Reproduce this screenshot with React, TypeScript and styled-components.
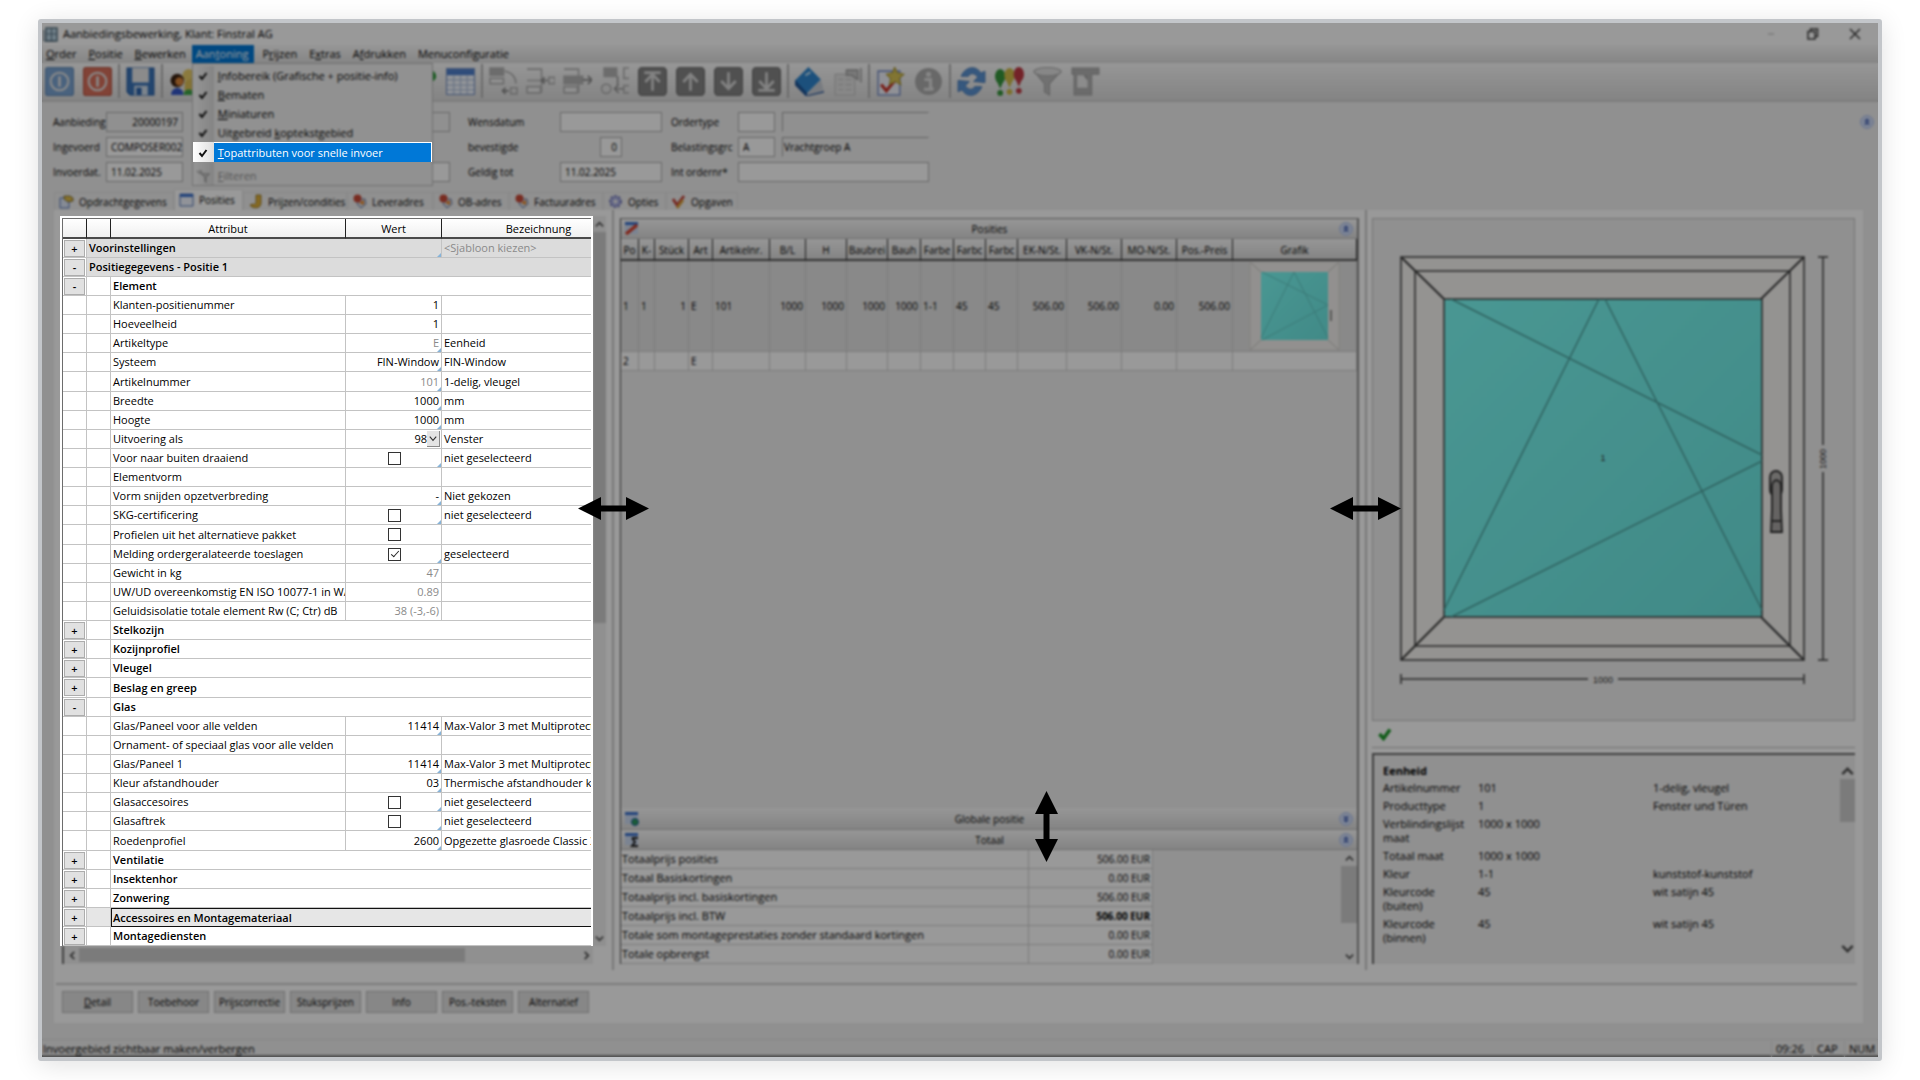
import React from "react";
import styled, { createGlobalStyle, css } from "styled-components";

const Global = createGlobalStyle`
  *, *::before, *::after { box-sizing: border-box; }
  body { margin: 0; background: #fff; }
  body, button, input, select, table { font-family: "Open Sans", "Noto Sans", sans-serif; font-size: 11px; line-height: 16px; color: #000; }
  button, input, select { margin: 0; padding: 0; }
`;

/* ---------- window frame ---------- */
const Page = styled.div`
  min-height: 100vh;
  padding: 19px 38px 20px;
`;
const Frame = styled.div`
  border: 4px solid #c3c6ca;
  border-radius: 3px;
  box-shadow: 0 4px 26px rgba(0, 0, 0, 0.12);
  position: relative;
  background: #f0f0f0;
`;
const Shade = styled.div`
  position: absolute;
  inset: 0;
  z-index: 5;
  background: rgba(0, 0, 0, 0.4);
  backdrop-filter: blur(1px);
  pointer-events: none;
`;

/* ---------- title, menu, toolbar ---------- */
const TitleBar = styled.header`
  height: 22px;
  background: #fff;
  display: flex;
  align-items: center;
  gap: 5px;
  padding: 0 16px 0 1px;
`;
const Title = styled.h1`
  font-size: 11px;
  line-height: 16px;
  font-weight: 400;
  margin: 0;
  flex: 1;
`;
const WindowButtons = styled.div`
  display: flex;
  gap: 28px;
`;
const BareButton = styled.button`
  border: 0;
  background: none;
  display: flex;
  align-items: center;
  justify-content: center;
`;
const MenuBar = styled.nav`
  height: 18px;
  display: flex;
  background: linear-gradient(#fbfbfb, #dedede);
`;
const MenuSlot = styled.div`
  position: relative;
  margin-right: 2px;
`;
const MenuButton = styled.button<{ $open?: boolean }>`
  border: 0;
  height: 18px;
  padding: 0 6px;
  background: ${(p) => (p.$open ? "#0078d7" : "none")};
  color: ${(p) => (p.$open ? "#fff" : "#000")};
  &:first-child {
    padding-left: 4px;
  }
`;
const Popup = styled.ul`
  position: absolute;
  top: 18px;
  left: 0;
  width: 241px;
  list-style: none;
  margin: 0;
  padding: 2px 0 0;
  border: 1px solid #bcbcbc;
  background: #f2f2f2;
`;
const MenuItem = styled.li<{ $active?: boolean }>`
  display: grid;
  grid-template-columns: 21px 1fr;
  height: 19px;
  background: linear-gradient(90deg, #fafafa, #dcdcdc 21px, #f2f2f2 21px);
  ${(p) =>
    p.$active &&
    css`
      position: relative;
      z-index: 10;
      height: 20px;
      padding: 1px 1px 0 0;
      background: linear-gradient(90deg, #fff, #dedede 21px, #fff 21px);
    `}
`;
const MenuMark = styled.span`
  display: flex;
  align-items: center;
  justify-content: center;
`;
const MenuAction = styled.button<{ $active?: boolean; $off?: boolean }>`
  border: 0;
  text-align: left;
  padding-left: 4px;
  white-space: nowrap;
  background: ${(p) => (p.$active ? "#0078d7" : "none")};
  color: ${(p) => (p.$active ? "#fff" : p.$off ? "#8d8d8d" : "#000")};
`;
const MenuRule = styled.li`
  height: 4px;
  background: linear-gradient(90deg, #fafafa, #dcdcdc 21px, #f2f2f2 21px);
`;
const ToolBar = styled.div`
  height: 39px;
  display: flex;
  align-items: center;
  gap: 9px;
  padding: 0 3px 1px;
  background: linear-gradient(#fbfbfb, #dcdcdc);
  border-bottom: 2px solid #d2d2d2;
`;
const ToolGroup = styled.div`
  display: flex;
  gap: 8px;
`;
const ToolButton = styled(BareButton)`
  width: 29px;
  height: 29px;
  & > svg {
    width: 29px;
    height: 29px;
  }
`;
const ToolGap = styled.span`
  width: 192px;
`;
const ToolRule = styled.span`
  width: 2px;
  height: 34px;
  margin: 0 -3px;
  background: #b4b4b4;
`;

/* ---------- head form ---------- */
const HeadForm = styled.form`
  display: grid;
  grid-template-columns: 53px 77px 17px 250px 18px 92px 102px 9px 67px 37px 7px 147px 1fr 15px;
  grid-auto-rows: 20px;
  row-gap: 5px;
  align-items: center;
  padding: 10px 4px 8px 11px;
`;
const FieldLabel = styled.label<{ $col: number }>`
  grid-column: ${(p) => p.$col};
  font-size: 10px;
  white-space: nowrap;
`;
const Field = styled.input<{ $col: string; $look?: "grey" | "sunken"; $right?: boolean; $short?: boolean }>`
  grid-column: ${(p) => p.$col};
  width: ${(p) => (p.$short ? "22px" : "100%")};
  justify-self: center;
  height: 20px;
  font-size: 10px;
  padding: ${(p) => (p.$right ? "0 4px" : "0 0 0 4px")};
  border: 1px solid #b0b0b0;
  border-radius: 0;
  text-align: ${(p) => (p.$right ? "right" : "left")};
  background: ${(p) => (p.$look ? "#f0f0f0" : "#fff")};
  ${(p) => p.$look === "sunken" && "border-color: #a8a8a8 #f4f4f4 #f4f4f4 #a8a8a8; padding: 0 1px;"}
`;
const HeadToggle = styled(BareButton)`
  grid-column: 14;
  grid-row: 1;
`;

/* ---------- tabs ---------- */
const Tabs = styled.div`
  display: flex;
  align-items: flex-end;
  padding-left: 12px;
  height: 20px;
`;
const Tab = styled.button<{ $on?: boolean; $w: number }>`
  width: ${(p) => p.$w}px;
  height: ${(p) => (p.$on ? 21 : 18)}px;
  display: flex;
  align-items: center;
  gap: 5px;
  padding-left: 4px;
  font-size: 10px;
  white-space: nowrap;
  border: 1px solid #e4e4e4;
  border-bottom: 0;
  background: ${(p) => (p.$on ? "#fff" : "#f0f0f0")};
`;
const TabPanel = styled.main`
  margin: 0 15px 0 12px;
  background: #fff;
`;
const Workspace = styled.div`
  display: grid;
  grid-template-columns: 546px 14px minmax(0, 1fr) 13px 483px;
  padding: 6px 8px 19px 6px;
`;
const Splitter = styled.div`
  justify-self: center;
  width: 2px;
  margin: -6px 0;
  background: #c8c8c8;
  display: flex;
  align-items: center;
  justify-content: center;
`;
const Arrow = styled.svg<{ $lift: number }>`
  position: relative;
  z-index: 10;
  flex: none;
  bottom: ${(p) => p.$lift}px;
  pointer-events: none;
`;

/* ---------- attribute grid ---------- */
const GridPane = styled.section`
  display: grid;
  grid-template-columns: 533px 13px;
  grid-template-rows: auto 18px;
`;
const LitArea = styled.div`
  position: relative;
  z-index: 10;
  background: #fff;
  padding: 2px 2px 0;
`;
const TableClip = styled.div`
  overflow: hidden;
  border: solid #6d6d6d;
  border-width: 1px 0 0 1px;
`;
const AttrTable = styled.table`
  table-layout: fixed;
  width: 573px;
  border-collapse: separate;
  border-spacing: 0;
  & th {
    height: 20px;
    padding: 2px 0 0;
    font-weight: 400;
    background: linear-gradient(#fff, #f0f0f0);
    border-right: 1px solid #222;
    border-bottom: 2px solid #4a4a4a;
  }
  & td {
    height: 19px;
    padding: 0 0 0 2px;
    line-height: 18px;
    white-space: nowrap;
    overflow: hidden;
    border-right: 1px solid #c3c3c3;
    border-bottom: 1px solid #c3c3c3;
  }
  & tbody tr:nth-child(8n) td {
    height: 20px;
  }
`;
const GroupRow = styled.tr<{ $shade?: boolean; $mark?: boolean }>`
  font-weight: 600;
  & td + td {
    ${(p) => p.$shade && "background: #dcdcdc;"}
    ${(p) => p.$mark && "background: #e6e6e6;"}
  }
  ${(p) =>
    p.$mark &&
    css`
      & td:last-child {
        border: solid #111;
        border-width: 1px 0 1px 1px;
        padding-left: 1px;
        line-height: 17px;
      }
    `}
`;
const corner = css`
  position: relative;
  &::after {
    content: "";
    position: absolute;
    right: 0;
    bottom: 0;
    border-left: 4px solid transparent;
    border-bottom: 4px solid #86b3d9;
  }
`;
const ValueCell = styled.td<{ $grey?: boolean; $corner?: boolean; $mid?: boolean }>`
  text-align: ${(p) => (p.$mid ? "center" : "right")};
  color: ${(p) => (p.$grey ? "#8a8a8a" : "#000")};
  ${(p) => p.$corner && corner}
`;
const Value = styled.span`
  margin-right: 2px;
`;
const CornerCell = styled.td`
  ${corner}
`;
const Hint = styled.td`
  font-weight: 400;
  color: #8a8a8a;
`;
const Expander = styled.button`
  display: block;
  width: 21px;
  height: 17px;
  margin-left: -1px;
  border: 1px solid #adadad;
  background: #e1e1e1;
  line-height: 13px;
  font-weight: 600;
`;
const Tick = styled.input`
  appearance: none;
  display: block;
  width: 13px;
  height: 13px;
  margin: 0 auto;
  border: 1px solid #333;
  background: #fff;
  &:checked::after {
    content: "";
    display: block;
    width: 4px;
    height: 8px;
    margin: 0 0 0 4px;
    border: solid #222;
    border-width: 0 1px 1px 0;
    transform: rotate(42deg);
  }
`;
const Pick = styled.span`
  position: relative;
  display: block;
  & select {
    appearance: none;
    display: block;
    width: 100%;
    height: 18px;
    border: 0;
    background: none;
    padding-right: 14px;
    text-align-last: right;
  }
  & svg {
    position: absolute;
    right: 1px;
    top: 1px;
    background: #e4e4e4;
    border: solid #8a8a8a;
    border-width: 0 1px 1px 0;
    pointer-events: none;
  }
`;

/* ---------- scroll bars ---------- */
const Scroll = styled.div<{ $across?: boolean }>`
  display: flex;
  flex-direction: ${(p) => (p.$across ? "row" : "column")};
  align-items: stretch;
  background: #f0f0f0;
  ${(p) => p.$across && "padding-left: 2px; border-left: 2px solid #6d6d6d; margin-left: 2px;"}
`;
const ScrollTrack = styled.div<{ $across?: boolean }>`
  flex: 1;
  display: flex;
  flex-direction: ${(p) => (p.$across ? "row" : "column")};
  padding: ${(p) => (p.$across ? "2px 0" : "0")};
`;
const Thumb = styled.div<{ $part: number }>`
  flex: 0 0 ${(p) => p.$part}%;
  background: #cdcdcd;
`;
const ScrollButton = styled(BareButton)`
  flex: none;
  min-width: 13px;
  min-height: 16px;
`;

/* ---------- middle pane ---------- */
const MidPane = styled.section`
  display: flex;
  flex-direction: column;
  margin-top: 2px;
  border: solid #8c8c8c;
  border-width: 1px 2px 0 1px;
  border-left-color: #555;
  background: #f0f0f0;
  min-width: 0;
`;
const Bar = styled.div<{ $tall?: boolean }>`
  height: ${(p) => (p.$tall ? 22 : 20)}px;
  display: grid;
  grid-template-columns: 18px 1fr 18px;
  align-items: center;
  text-align: center;
  padding: 0 2px 0 3px;
  background: linear-gradient(#fbfbfb, #dcdcdc);
  border-bottom: 1px solid #bdbdbd;
`;
const BarTitle = styled.h2`
  margin: 0;
  font-size: 10px;
  line-height: 16px;
  font-weight: 400;
`;
const Filler = styled.div`
  flex: 1;
  display: flex;
  justify-content: center;
  align-items: flex-end;
`;
const VArrow = styled.svg`
  position: relative;
  z-index: 10;
  left: 57px;
  margin-bottom: -54px;
  pointer-events: none;
`;
const PosTable = styled.table`
  table-layout: fixed;
  width: 100%;
  border-collapse: separate;
  border-spacing: 0;
  font-size: 10px;
  & th {
    height: 22px;
    padding: 1px 0 0;
    overflow: hidden;
    white-space: nowrap;
    font-weight: 400;
    background: linear-gradient(#fbfbfb, #dcdcdc);
    border-right: 1px solid #333;
    border-bottom: 2px solid #555;
  }
  & td {
    height: 19px;
    padding: 0 2px;
    overflow: hidden;
    white-space: nowrap;
    border-right: 1px solid #cfcfcf;
    border-bottom: 1px solid #cfcfcf;
    background: #fff;
  }
  & tbody tr:first-child td {
    height: 91px;
    background: #e4e4e4;
  }
`;
const NumCell = styled.td<{ $right?: boolean }>`
  text-align: ${(p) => (p.$right ? "right" : "left")};
`;
const ThumbCell = styled.td`
  & svg {
    display: block;
    margin: 0 auto;
  }
`;
const Totals = styled.div`
  display: grid;
  grid-template-columns: minmax(0, 1fr) 16px;
`;
const TotalTable = styled.table`
  width: 532px;
  max-width: 100%;
  border-collapse: separate;
  border-spacing: 0;
  & th,
  & td {
    height: 19px;
    padding: 0 2px 0 1px;
    font-weight: 400;
    text-align: left;
    background: #fff;
    border-right: 1px solid #cfcfcf;
    border-bottom: 1px solid #cfcfcf;
  }
  & td {
    width: 124px;
    font-size: 10px;
    text-align: right;
  }
`;
const Strong = styled.strong`
  font-weight: 700;
`;

/* ---------- right pane ---------- */
const SidePane = styled.section`
  display: flex;
  flex-direction: column;
  margin-top: 2px;
`;
const Drawing = styled.div`
  flex: 1;
  background: #f0f0f0;
  border: 1px solid #c2c2c2;
  & svg {
    display: block;
    width: 100%;
    height: 100%;
  }
`;
const CheckRow = styled.div`
  height: 27px;
  display: flex;
  align-items: center;
  padding-left: 6px;
  border-bottom: 1px solid #bdbdbd;
`;
const InfoBox = styled.div`
  margin-top: 5px;
  height: 211px;
  display: flex;
  justify-content: space-between;
  background: #f0f0f0;
  border: solid #6a6a6a;
  border-width: 2px 0 0 2px;
`;
const InfoTable = styled.table`
  align-self: flex-start;
  table-layout: fixed;
  width: 440px;
  margin: 8px 0 0 9px;
  border-collapse: collapse;
  & caption {
    text-align: left;
    font-weight: 700;
    line-height: 16px;
  }
  & th,
  & td {
    padding: 2px 16px 2px 0;
    text-align: left;
    vertical-align: top;
    font-weight: 400;
    line-height: 14px;
  }
`;
const InfoScroll = styled(Scroll)`
  width: 15px;
  padding: 8px 0;
`;

/* ---------- bottom ---------- */
const Actions = styled.div`
  display: flex;
  gap: 5px;
  margin: 0 6px 0 2px;
  padding: 6px 0 10px 6px;
  border-top: 2px solid #cfcfcf;
`;
const ActionButton = styled.button`
  width: 71px;
  height: 22px;
  font-size: 10px;
  white-space: nowrap;
  border: 1px solid #bcbcbc;
  background: #e1e1e1;
`;
const StatusBar = styled.footer`
  margin-top: 16px;
  height: 18px;
  display: flex;
  align-items: center;
  border-top: 1px solid #e0e0e0;
  border-bottom: 2px solid #8a8a8a;
  padding-top: 2px;
`;
const StatusText = styled.span`
  flex: 1;
  padding-left: 1px;
`;
const StatusCell = styled.span<{ $w: number }>`
  width: ${(p) => p.$w}px;
  padding-left: 4px;
  white-space: nowrap;
  border-left: 1px solid #e2e2e2;
`;

/* ---------- small drawings ---------- */
const Chevron = ({ turn = 0, size = 9, weight = 2 }: { turn?: number; size?: number; weight?: number }) => (
  <svg width={size} height={size} viewBox="0 0 10 10" aria-hidden="true">
    <path d="M1 7 5 3l4 4" fill="none" stroke="#555" strokeWidth={weight} transform={`rotate(${turn} 5 5)`} />
  </svg>
);
const Fold = ({ down }: { down?: boolean }) => (
  <svg width="14" height="14" viewBox="0 0 14 14" aria-hidden="true">
    <circle cx="7" cy="7" r="6.5" fill="#cfdcf8" stroke="#b4c4ec" />
    <path
      d="M5 6.500 7 4.500l2 2M5 9.500l2-2 2 2"
      fill="none"
      stroke="#3a58b0"
      strokeWidth="1.400"
      transform={down ? "rotate(180 7 7)" : undefined}
    />
  </svg>
);
const CheckMark = () => (
  <svg width="10" height="10" viewBox="0 0 10 10" aria-hidden="true">
    <path d="M1.500 5 4 8l4.500-6" fill="none" stroke="#111" strokeWidth="2" />
  </svg>
);
const Filter = () => (
  <svg width="14" height="14" viewBox="0 0 14 14" aria-hidden="true">
    <path d="M1 2l4 3M4 1l2 3M6 5h7l-3 3v5l-1-1V8z" fill="none" stroke="#aaa" strokeWidth="1.500" />
  </svg>
);
const AppIcon = () => (
  <svg width="15" height="15" viewBox="0 0 15 15" aria-hidden="true">
    <path d="M3 1h11v13H3z" fill="#b9d3e2" stroke="#5c7585" strokeWidth="1.500" />
    <path d="M1 3v11h11M8.500 1v13M3 7h11" fill="none" stroke="#5c7585" />
  </svg>
);
const Power = ({ color, edge }: { color: string; edge: string }) => (
  <svg viewBox="0 0 28 28" aria-hidden="true">
    <rect x="0.500" y="0.500" width="27" height="27" rx="2.500" fill={color} stroke={edge} />
    <circle cx="14" cy="14" r="8.500" fill="none" stroke="#e6e6e6" strokeWidth="2" />
    <path d="M14 9v10" stroke="#e6e6e6" strokeWidth="2.500" />
  </svg>
);
const Save = () => (
  <svg viewBox="0 0 28 28" aria-hidden="true">
    <path d="M1 1h26v26H4l-3-3z" fill="#3b74b8" stroke="#1f579f" />
    <path d="M6 1h16v14H6z" fill="#e8e8e8" />
    <path d="M8 18h13v9H8z" fill="#cfdcea" />
    <path d="M10 20h5v7h-5z" fill="#2a62ab" />
  </svg>
);
const People = () => (
  <svg viewBox="0 0 28 28" aria-hidden="true">
    <circle cx="19" cy="8" r="6" fill="#e8cc68" />
    <path d="M15 14l11-5v14H15z" fill="#dcbf58" />
    <circle cx="8" cy="13" r="6.500" fill="#3b2212" />
    <circle cx="10" cy="14" r="4" fill="#d8843a" />
    <path d="M2 27c0-9 12-9 12 0z" fill="#3658c8" />
    <path d="M14 27c0-7 10-7 11 0z" fill="#3fa648" />
  </svg>
);
const GreenDrop = () => (
  <svg viewBox="0 0 28 28" aria-hidden="true">
    <path d="M14 3h8c6 2 7 8 2 11l-3 2z" fill="#2f9a3a" />
  </svg>
);
const Table = () => (
  <svg viewBox="0 0 28 28" aria-hidden="true">
    <rect x="0.500" y="1.500" width="27" height="25" fill="#f4f8ff" stroke="#6f8cc0" />
    <path d="M1 2h26v6H1z" fill="#4f7fcc" />
    <path d="M1 12.500h26M1 17.500h26M1 22h26M7.500 8v18M14 8v18M20.500 8v18" stroke="#b3c3de" strokeWidth="1.200" />
  </svg>
);
const Insert = ({ kind }: { kind: number }) => (
  <svg viewBox="0 0 28 28" aria-hidden="true">
    <g fill="none" stroke="#b4b4b4" strokeWidth="1.600">
      {kind === 0 && (
        <>
          <path d="M1 1h13v7H1z" fill="#b4b4b4" />
          <path d="M1 11h13v5H1z" fill="#f3f3f3" />
          <path d="M15 4c7 1 11 6 11 12M21 20h6v6h-6z" />
          <path d="M19 23h-6m3-3-3 3 3 3" stroke="#8a8a8a" />
        </>
      )}
      {kind === 1 && (
        <>
          <path d="M1 2h14v22H1M1 13h14" />
          <path d="M1 19h13v6H1z" fill="#eee" />
          <path d="M16 13h5m-3-3-3 3 3 3" stroke="#8a8a8a" />
          <path d="M22 10h6v6h-6z" />
        </>
      )}
      {kind === 2 && (
        <>
          <path d="M1 2h14v22H1" />
          <path d="M1 9h18v7H1z" fill="#b4b4b4" />
          <path d="M1 19h13v6H1z" fill="#eee" />
          <path d="M19 12.500h8m-3-4 4 4-4 4" stroke="#8a8a8a" />
        </>
      )}
      {kind === 3 && (
        <>
          <path d="M4 1h12v8H4z" fill="#b4b4b4" />
          <path d="M28 1h-5v10h5M28 18h-5v7h5" />
          <circle cx="6" cy="21" r="4.500" />
          <path d="M17 9v9M14 21h9m-5-4-4 4 4 4" stroke="#999" />
        </>
      )}
    </g>
  </svg>
);
const Move = ({ down, stop }: { down?: boolean; stop?: boolean }) => (
  <svg viewBox="0 0 28 28" aria-hidden="true">
    <rect x="0.500" y="0.500" width="27" height="27" rx="3.500" fill="#858585" stroke="#6e6e6e" />
    <g stroke="#dadada" strokeWidth="2.600" fill="none" transform={down ? "rotate(180 14 14)" : undefined}>
      <path d="M14 23V7M7 14.500l7-7.500 7 7.500" />
      {stop && <path d="M6 5.500h16" />}
    </g>
  </svg>
);
const Book = () => (
  <svg viewBox="0 0 28 28" aria-hidden="true">
    <path d="M0 13 13 0l12 12-14 14z" fill="#2f86cf" />
    <path d="M11 26 25 12l3 12-14 4z" fill="#c9ced6" />
    <path d="M0 13v4l11 11v-3zM11 28l17-4" fill="#1d5a96" stroke="#1d4f96" />
    <path d="M10 8l5-3" stroke="#bfe0f7" strokeWidth="2" />
  </svg>
);
const Props = () => (
  <svg viewBox="0 0 28 28" aria-hidden="true">
    <path d="M2 7h19v20H2z" fill="#e4e4e4" stroke="#c0c0c0" />
    <path d="M5 12h5M12 12h6M5 17h5M12 17h6M5 22h5M12 22h6" stroke="#d0d0d0" strokeWidth="2" />
    <path d="M13 3h11v9l-6-4h-5zM27 1v14" fill="#c9c9c9" stroke="#a5a5a5" strokeWidth="1.500" />
  </svg>
);
const Task = () => (
  <svg viewBox="0 0 28 28" aria-hidden="true">
    <path d="M2 4h21v23H2z" fill="#f0f2fa" stroke="#7f94c9" strokeWidth="1.500" />
    <path d="m5 17 5 6 9-11" fill="none" stroke="#c9382e" strokeWidth="3" />
    <path d="m18 0 2.500 5.500L27 7l-4.500 4L24 17l-5.500-3-5.500 3 1-6L10 7l6-1.500z" fill="#d9c455" stroke="#ab9836" />
  </svg>
);
const Info = () => (
  <svg viewBox="0 0 28 28" aria-hidden="true">
    <circle cx="14" cy="14" r="13" fill="#adadad" />
    <circle cx="14" cy="7" r="2.500" fill="#e0e0e0" />
    <path d="M10 12h6v9h3M9.500 21.500h9" fill="none" stroke="#e0e0e0" strokeWidth="3" />
  </svg>
);
const Refresh = () => (
  <svg viewBox="0 0 28 28" aria-hidden="true">
    <g fill="#5b93d2" stroke="#3f73b3" strokeWidth="0.800">
      <path d="M4 9C8-1 19-2 23 6l4-2v11l-11-1 4-4c-3-5-8-4-9-1z" />
      <path d="M24 19c-4 10-15 11-19 3l-4 2V13l11 1-4 4c3 5 8 4 9 1z" />
    </g>
  </svg>
);
const Marks = () => (
  <svg viewBox="0 0 28 28" aria-hidden="true">
    <g fill="#36963c">
      <ellipse cx="5" cy="9" rx="5" ry="7" />
      <path d="m1 12 4 9 4-9z" />
      <circle cx="5" cy="25" r="2.800" />
    </g>
    <g fill="#d0bc48">
      <ellipse cx="14" cy="8" rx="5" ry="7" />
      <path d="m10 11 4 9 4-9z" />
      <circle cx="14" cy="24" r="2.800" />
    </g>
    <g fill="#c03a44">
      <ellipse cx="23" cy="7" rx="5" ry="7" />
      <path d="m19 10 4 9 4-9z" />
      <circle cx="23" cy="23" r="2.800" />
    </g>
  </svg>
);
const Funnel = () => (
  <svg viewBox="0 0 28 28" aria-hidden="true">
    <path d="M1 4 11 16v8l5 3V16L27 4z" fill="#bdbdbd" stroke="#a5a5a5" />
    <ellipse cx="14" cy="4.500" rx="13" ry="4" fill="#e2e2e2" stroke="#adadad" />
  </svg>
);
const Panel = () => (
  <svg viewBox="0 0 28 28" aria-hidden="true">
    <path d="M1 1h26v6h-7v20H3V7H1z" fill="#b2b2b2" stroke="#a2a2a2" />
    <path d="M6 8h10v12H6z" fill="#e9e9e9" />
    <path d="m12 8 4 5V8z" fill="#9a9a9a" />
  </svg>
);
const TabIcon = ({ kind }: { kind: string }) => (
  <svg width="15" height="15" viewBox="0 0 15 15" aria-hidden="true">
    {kind === "props" && (
      <>
        <path d="M1 4h9v10H1z" fill="#dfe8f8" stroke="#5b78b8" />
        <path d="M5 2h6l3 2v3L9 8 5 5z" fill="#e0bd4a" stroke="#6b5a2a" strokeWidth="0.800" />
      </>
    )}
    {kind === "table" && (
      <>
        <path d="M1 1h13v12H1z" fill="#f2f6ff" stroke="#5577b8" />
        <path d="M1 1h13v3H1z" fill="#3f74cf" />
      </>
    )}
    {kind === "coin" && <path d="M8 1h5v8c0 6-9 6-11 2l3-1c2 1 3 0 3-2z" fill="#e0b23a" stroke="#8d6a18" strokeWidth="0.800" />}
    {kind === "address" && (
      <>
        <path d="M7 5h6l1 5-5 4-4-4z" fill="#d9dde6" stroke="#6d7da6" />
        <circle cx="5.500" cy="4.500" r="4" fill="#c94a38" />
        <path d="m7 9 5-3v5z" fill="#e8882c" />
      </>
    )}
    {kind === "gear" && (
      <>
        <circle cx="7.500" cy="7.500" r="5.500" fill="#a9aee0" stroke="#7d82bd" strokeWidth="2" strokeDasharray="2.500 1.500" />
        <circle cx="7.500" cy="7.500" r="2" fill="#f0f0f0" />
      </>
    )}
    {kind === "task" && (
      <>
        <path d="m2 5 4 6 7-9" fill="none" stroke="#c4453a" strokeWidth="2.800" />
        <path d="m6 14 6-8" stroke="#dba23a" strokeWidth="2.800" />
      </>
    )}
  </svg>
);
const BarIcon = ({ kind }: { kind: string }) => (
  <svg width="15" height="15" viewBox="0 0 15 15" aria-hidden="true">
    <path d="M1 1h13v12H1z" fill="#cddcf4" />
    <path d="M1 1h13v3H1z" fill="#3f74cf" />
    {kind === "edit" && <path d="M2 13 13 4" stroke="#d9442f" strokeWidth="3.500" />}
    {kind === "globe" && <circle cx="11" cy="11" r="3.500" fill="#2e9a5a" stroke="#2059a8" />}
    {kind === "sum" && <path d="M8 6h6M8 6l3 4-3 4h6" fill="none" stroke="#222" strokeWidth="2" />}
  </svg>
);
const DoubleArrow = <path d="M0 11.500 23 0v8.500h25V0l23 11.500L48 23v-8.500H23V23z" fill="#000" />;

const WindowThumb = () => (
  <svg width="91" height="88" viewBox="0 0 91 88" aria-hidden="true">
    <defs>
      <linearGradient id="tg" x1="0" y1="0" x2="1" y2="1">
        <stop offset="0" stopColor="#7bfcf5" />
        <stop offset="1" stopColor="#6ce6e1" />
      </linearGradient>
    </defs>
    <path d="M1 0h89v88H1z" fill="#f3f1ee" stroke="#dcdad6" />
    <path d="m1 0 11 10M90 0 79 10M1 88l11-10M90 88 79 78" stroke="#c8c6c2" />
    <path d="M12 10h67v68H12z" fill="url(#tg)" />
    <path d="m12 76 33-66 34 66M13 10l66 33-66 35" fill="none" stroke="#63cbc7" />
    <path d="M82 48v11" stroke="#777" strokeWidth="1.500" />
  </svg>
);

const WindowDrawing = () => (
  <svg viewBox="0 0 481 501" role="img" aria-label="Aanzicht element">
    <defs>
      <linearGradient id="glass" x1="0" y1="0" x2="1" y2="1">
        <stop offset="0" stopColor="#7bfcf5" />
        <stop offset="1" stopColor="#6ce6e1" />
      </linearGradient>
    </defs>
    <g stroke="#444" strokeWidth="1.500" fill="#f7f5f2">
      <path d="M28 38h403v403H28z" />
      <path d="M42 52h375v375H42z" />
      <path d="m28 38 43 42M431 38l-43 42M28 441l43-43M431 441l-43-43" strokeWidth="2" />
      <path d="M71 80h318v318H71z" fill="url(#glass)" />
    </g>
    <g fill="none" stroke="#4fa5a1" strokeWidth="1.500">
      <path d="m71 391 155-311M232 80l157 311M78 80l311 156M389 242 78 398" />
    </g>
    <g fill="#b4b2b0" stroke="#333" strokeWidth="1.800">
      <rect x="397" y="252" width="12" height="25" rx="6" />
      <path d="M399 268c0-9 9-9 9 0v22l1 23h-11l1-23z" fill="#a8a6a4" />
      <path d="M398 302h11" />
    </g>
    <g stroke="#444" strokeWidth="1.500">
      <path d="M28 460h187M245 460h186M28 455v10M431 455v10" />
      <path d="M450 38v188M450 253v188M445 38h10M445 441h10" />
    </g>
    <g fontSize="9" textAnchor="middle" fill="#333" fontFamily="Liberation Sans, sans-serif">
      <text x="230" y="464">1000</text>
      <text x="230" y="242">1</text>
      <text transform="translate(453 240) rotate(-90)">1000</text>
    </g>
  </svg>
);

/* ---------- data ---------- */
type Attr = { g?: string; open?: boolean; mark?: boolean; n?: string; v?: string; d?: string; grey?: boolean; tri?: boolean; box?: boolean; on?: boolean; pick?: boolean };
const attrs: Attr[] = [
  { g: "Element", open: true },
  { n: "Klanten-positienummer", v: "1" },
  { n: "Hoeveelheid", v: "1" },
  { n: "Artikeltype", v: "E", grey: true, tri: true, d: "Eenheid" },
  { n: "Systeem", v: "FIN-Window", tri: true, d: "FIN-Window" },
  { n: "Artikelnummer", v: "101", grey: true, tri: true, d: "1-delig, vleugel" },
  { n: "Breedte", v: "1000", tri: true, d: "mm" },
  { n: "Hoogte", v: "1000", tri: true, d: "mm" },
  { n: "Uitvoering als", v: "98", pick: true, d: "Venster" },
  { n: "Voor naar buiten draaiend", box: true, tri: true, d: "niet geselecteerd" },
  { n: "Elementvorm" },
  { n: "Vorm snijden opzetverbreding", v: "-", tri: true, d: "Niet gekozen" },
  { n: "SKG-certificering", box: true, tri: true, d: "niet geselecteerd" },
  { n: "Profielen uit het alternatieve pakket", box: true },
  { n: "Melding ordergeralateerde toeslagen", box: true, on: true, tri: true, d: "geselecteerd" },
  { n: "Gewicht in kg", v: "47", grey: true },
  { n: "UW/UD overeenkomstig EN ISO 10077-1 in W/", v: "0.89", grey: true },
  { n: "Geluidsisolatie totale element Rw (C; Ctr) dB", v: "38 (-3,-6)", grey: true },
  { g: "Stelkozijn" },
  { g: "Kozijnprofiel" },
  { g: "Vleugel" },
  { g: "Beslag en greep" },
  { g: "Glas", open: true },
  { n: "Glas/Paneel voor alle velden", v: "11414", tri: true, d: "Max-Valor 3 met Multiprotect" },
  { n: "Ornament- of speciaal glas voor alle velden" },
  { n: "Glas/Paneel 1", v: "11414", tri: true, d: "Max-Valor 3 met Multiprotect" },
  { n: "Kleur afstandhouder", v: "03", tri: true, d: "Thermische afstandhouder kle" },
  { n: "Glasaccesoires", box: true, tri: true, d: "niet geselecteerd" },
  { n: "Glasaftrek", box: true, tri: true, d: "niet geselecteerd" },
  { n: "Roedenprofiel", v: "2600", tri: true, d: "Opgezette glasroede Classic 3" },
  { g: "Ventilatie" },
  { g: "Insektenhor" },
  { g: "Zonwering" },
  { g: "Accessoires en Montagemateriaal", mark: true },
  { g: "Montagediensten" },
];
const posCols: [string, number, string, string, boolean?][] = [
  ["Po", 18, "1", "2"], ["K-", 16, "1", ""], ["Stück", 34, "1", "", true], ["Art", 24, "E", "E"],
  ["Artikelnr.", 57, "101", ""], ["B/L", 36, "1000", "", true], ["H", 41, "1000", "", true],
  ["Baubrei", 41, "1000", "", true], ["Bauh", 33, "1000", "", true], ["Farbe", 33, "1-1", ""],
  ["Farbc", 32, "45", ""], ["Farbc", 32, "45", ""], ["EK-N/St.", 49, "506.00", "", true],
  ["VK-N/St.", 55, "506.00", "", true], ["MO-N/St.", 55, "0.00", "", true], ["Pos.-Preis", 56, "506.00", "", true],
];
const totals = [
  ["Totaalprijs posities", "506.00 EUR"],
  ["Totaal Basiskortingen", "0.00 EUR"],
  ["Totaalprijs incl. basiskortingen", "506.00 EUR"],
  ["Totaalprijs incl. BTW", "506.00 EUR"],
  ["Totale som montageprestaties zonder standaard kortingen", "0.00 EUR"],
  ["Totale opbrengst", "0.00 EUR"],
];
const info = [
  ["Artikelnummer", "101", "1-delig, vleugel"],
  ["Producttype", "1", "Fenster und Türen"],
  ["Verblindingslijst maat", "1000 x 1000", ""],
  ["Totaal maat", "1000 x 1000", ""],
  ["Kleur", "1-1", "kunststof-kunststof"],
  ["Kleurcode (buiten)", "45", "wit satijn 45"],
  ["Kleurcode (binnen)", "45", "wit satijn 45"],
];
const tabs: [string, string, number][] = [
  ["Opdrachtgegevens", "props", 120], ["Posities", "table", 69], ["Prijzen/condities", "coin", 104],
  ["Leveradres", "address", 86], ["OB-adres", "address", 76], ["Factuuradres", "address", 94],
  ["Opties", "gear", 63], ["Opgaven", "task", 72],
];

const AttributeRow = ({ a }: { a: Attr }) =>
  a.g ? (
    <GroupRow $mark={a.mark}>
      <td><Expander aria-label={a.g}>{a.open ? "-" : "+"}</Expander></td>
      <td />
      <td colSpan={3}>{a.g}</td>
    </GroupRow>
  ) : (
    <tr>
      <td />
      <td />
      <td>{a.n}</td>
      <ValueCell $grey={a.grey} $corner={a.tri} $mid={a.box}>
        {a.box && <Tick type="checkbox" defaultChecked={a.on} aria-label={a.n} />}
        {a.pick && (
          <Pick>
            <select aria-label={a.n}><option>{a.v}</option></select>
            <svg width="13" height="16" viewBox="0 0 13 16" aria-hidden="true">
              <path d="m3 6 3.500 4L10 6" fill="none" stroke="#333" strokeWidth="1.200" />
            </svg>
          </Pick>
        )}
        {!a.box && !a.pick && <Value>{a.v}</Value>}
      </ValueCell>
      <td>{a.d}</td>
    </tr>
  );

export default function App() {
  return (
    <Page>
      <Global />
      <Frame>
        <TitleBar>
          <AppIcon />
          <Title>Aanbiedingsbewerking, Klant: Finstral AG</Title>
          <WindowButtons>
            <BareButton aria-label="Minimaliseren">
              <svg width="14" height="12" viewBox="0 0 14 12"><path d="M4 6h6" stroke="#ccc" strokeWidth="1.500" /></svg>
            </BareButton>
            <BareButton aria-label="Verkleinen">
              <svg width="14" height="12" viewBox="0 0 14 12"><path d="M2 3.500h7V11H2zM4.500 3V1h7v7.500H9.500" fill="none" stroke="#444" strokeWidth="1.500" /></svg>
            </BareButton>
            <BareButton aria-label="Sluiten">
              <svg width="14" height="12" viewBox="0 0 14 12"><path d="m2 1 10 10M12 1 2 11" stroke="#444" strokeWidth="1.500" /></svg>
            </BareButton>
          </WindowButtons>
        </TitleBar>
        <MenuBar>
          <MenuButton><u>O</u>rder</MenuButton>
          <MenuButton><u>P</u>ositie</MenuButton>
          <MenuButton><u>B</u>ewerken</MenuButton>
          <MenuSlot>
            <MenuButton as="button" $open>Aan<u>t</u>oning</MenuButton>
            <Popup>
              <MenuItem><MenuMark><CheckMark /></MenuMark><MenuAction><u>I</u>nfobereik (Grafische + positie-info)</MenuAction></MenuItem>
              <MenuItem><MenuMark><CheckMark /></MenuMark><MenuAction><u>B</u>ematen</MenuAction></MenuItem>
              <MenuItem><MenuMark><CheckMark /></MenuMark><MenuAction><u>M</u>iniaturen</MenuAction></MenuItem>
              <MenuItem><MenuMark><CheckMark /></MenuMark><MenuAction>Uitgebreid <u>k</u>optekstgebied</MenuAction></MenuItem>
              <MenuItem $active><MenuMark><CheckMark /></MenuMark><MenuAction $active><u>T</u>opattributen voor snelle invoer</MenuAction></MenuItem>
              <MenuRule />
              <MenuItem><MenuMark><Filter /></MenuMark><MenuAction $off><u>F</u>ilteren</MenuAction></MenuItem>
            </Popup>
          </MenuSlot>
          <MenuButton>P<u>r</u>ijzen</MenuButton>
          <MenuButton>E<u>x</u>tras</MenuButton>
          <MenuButton>A<u>f</u>drukken</MenuButton>
          <MenuButton>Menuconfiguratie</MenuButton>
        </MenuBar>
        <ToolBar>
          <ToolButton aria-label="Start"><Power color="#7ba4d2" edge="#5f88b6" /></ToolButton>
          <ToolButton aria-label="Stop"><Power color="#d8705c" edge="#b65544" /></ToolButton>
          <ToolRule />
          <ToolButton aria-label="Opslaan"><Save /></ToolButton>
          <ToolRule />
          <ToolButton aria-label="Klant"><People /></ToolButton>
          <ToolGap />
          <ToolButton aria-label="Verder"><GreenDrop /></ToolButton>
          <ToolButton aria-label="Tabel"><Table /></ToolButton>
          <ToolRule />
          <ToolGroup>
            {[0, 1, 2, 3].map((k) => <ToolButton key={k} aria-label={"Invoegen " + (k + 1)}><Insert kind={k} /></ToolButton>)}
          </ToolGroup>
          <ToolButton aria-label="Eerste"><Move stop /></ToolButton>
          <ToolButton aria-label="Vorige"><Move /></ToolButton>
          <ToolButton aria-label="Volgende"><Move down /></ToolButton>
          <ToolButton aria-label="Laatste"><Move down stop /></ToolButton>
          <ToolRule />
          <ToolButton aria-label="Catalogus"><Book /></ToolButton>
          <ToolButton aria-label="Eigenschappen"><Props /></ToolButton>
          <ToolRule />
          <ToolButton aria-label="Controle"><Task /></ToolButton>
          <ToolButton aria-label="Informatie"><Info /></ToolButton>
          <ToolRule />
          <ToolButton aria-label="Vernieuwen"><Refresh /></ToolButton>
          <ToolButton aria-label="Meldingen"><Marks /></ToolButton>
          <ToolButton aria-label="Filter"><Funnel /></ToolButton>
          <ToolButton aria-label="Paneel"><Panel /></ToolButton>
        </ToolBar>

        <HeadForm>
          <FieldLabel $col={1} htmlFor="nr">Aanbieding</FieldLabel>
          <Field $col="2" id="nr" $look="grey" $right readOnly defaultValue="20000197" />
          <Field $col="4" $look="grey" readOnly aria-label="Klant" />
          <FieldLabel $col={6} htmlFor="wens">Wensdatum</FieldLabel>
          <Field $col="7" id="wens" />
          <FieldLabel $col={9} htmlFor="otype">Ordertype</FieldLabel>
          <Field $col="10" id="otype" />
          <Field $col="12" $look="sunken" readOnly aria-label="Ordertype omschrijving" />
          <HeadToggle type="button" aria-label="Inklappen"><Fold /></HeadToggle>

          <FieldLabel $col={1} htmlFor="door">Ingevoerd</FieldLabel>
          <Field $col="2" id="door" defaultValue="COMPOSER002" />
          <FieldLabel $col={6} htmlFor="bev">bevestigde</FieldLabel>
          <Field $col="7" id="bev" $short $right defaultValue="0" />
          <FieldLabel $col={9} htmlFor="bel">Belastingsgrc</FieldLabel>
          <Field $col="10" id="bel" defaultValue="A" />
          <Field $col="12" $look="sunken" readOnly aria-label="Vrachtgroep" defaultValue="Vrachtgroep A" />

          <FieldLabel $col={1} htmlFor="dat">Invoerdat.</FieldLabel>
          <Field $col="2" id="dat" defaultValue="11.02.2025" />
          <Field $col="4" aria-label="Omschrijving" />
          <FieldLabel $col={6} htmlFor="geldig">Geldig tot</FieldLabel>
          <Field $col="7" id="geldig" defaultValue="11.02.2025" />
          <FieldLabel $col={9} htmlFor="intern">Int ordernr*</FieldLabel>
          <Field $col="10 / 13" id="intern" />
        </HeadForm>

        <Tabs role="tablist">
          {tabs.map(([t, icon, w]) => (
            <Tab key={t} role="tab" $w={w} $on={t === "Posities"} aria-selected={t === "Posities"}>
              <TabIcon kind={icon} />{t}
            </Tab>
          ))}
        </Tabs>
        <TabPanel>
          <Workspace>
            <GridPane>
              <LitArea>
                <TableClip>
                  <AttrTable>
                    <colgroup>
                      <col width="24" /><col width="24" /><col width="235" /><col width="96" /><col width="194" />
                    </colgroup>
                    <thead>
                      <tr><th /><th /><th>Attribut</th><th>Wert</th><th>Bezeichnung</th></tr>
                    </thead>
                    <tbody>
                      <GroupRow $shade>
                        <td><Expander aria-label="Voorinstellingen">+</Expander></td>
                        <CornerCell colSpan={3}>Voorinstellingen</CornerCell>
                        <Hint>&lt;Sjabloon kiezen&gt;</Hint>
                      </GroupRow>
                      <GroupRow $shade>
                        <td><Expander aria-label="Positiegegevens">-</Expander></td>
                        <td colSpan={4}>Positiegegevens - Positie 1</td>
                      </GroupRow>
                      {attrs.map((a) => <AttributeRow key={a.g || a.n} a={a} />)}
                    </tbody>
                  </AttrTable>
                </TableClip>
              </LitArea>
              <Scroll>
                <ScrollButton aria-label="Omhoog"><Chevron /></ScrollButton>
                <ScrollTrack><Thumb $part={56} /></ScrollTrack>
                <ScrollButton aria-label="Omlaag"><Chevron turn={180} /></ScrollButton>
              </Scroll>
              <Scroll $across>
                <ScrollButton aria-label="Naar links"><Chevron turn={-90} /></ScrollButton>
                <ScrollTrack $across><Thumb $part={77} /></ScrollTrack>
                <ScrollButton aria-label="Naar rechts"><Chevron turn={90} /></ScrollButton>
              </Scroll>
            </GridPane>

            <Splitter><Arrow width="71" height="23" viewBox="0 0 71 23" $lift={82}>{DoubleArrow}</Arrow></Splitter>

            <MidPane>
              <Bar><BarIcon kind="edit" /><BarTitle>Posities</BarTitle><BareButton aria-label="Posities inklappen"><Fold /></BareButton></Bar>
              <PosTable>
                <colgroup>{posCols.map((c, i) => <col key={i} width={c[1]} />)}<col /></colgroup>
                <thead><tr>{posCols.map((c, i) => <th key={i}>{c[0]}</th>)}<th>Grafik</th></tr></thead>
                <tbody>
                  <tr>{posCols.map((c, i) => <NumCell key={i} $right={c[4]}>{c[2]}</NumCell>)}<ThumbCell><WindowThumb /></ThumbCell></tr>
                  <tr>{posCols.map((c, i) => <NumCell key={i}>{c[3]}</NumCell>)}<td /></tr>
                </tbody>
              </PosTable>
              <Filler>
                <VArrow width="23" height="71" viewBox="0 0 23 71"><g transform="translate(23 0) rotate(90)">{DoubleArrow}</g></VArrow>
              </Filler>
              <Bar $tall><BarIcon kind="globe" /><BarTitle>Globale positie</BarTitle><BareButton aria-label="Globale positie uitklappen"><Fold down /></BareButton></Bar>
              <Bar><BarIcon kind="sum" /><BarTitle>Totaal</BarTitle><BareButton aria-label="Totaal inklappen"><Fold /></BareButton></Bar>
              <Totals>
                <TotalTable>
                  <tbody>
                    {totals.map(([k, v], i) => <tr key={k}><th scope="row">{k}</th><td>{i === 3 ? <Strong>{v}</Strong> : v}</td></tr>)}
                  </tbody>
                </TotalTable>
                <Scroll>
                  <ScrollButton aria-label="Totalen omhoog"><Chevron /></ScrollButton>
                  <ScrollTrack><Thumb $part={69} /></ScrollTrack>
                  <ScrollButton aria-label="Totalen omlaag"><Chevron turn={180} /></ScrollButton>
                </Scroll>
              </Totals>
            </MidPane>

            <Splitter><Arrow width="71" height="23" viewBox="0 0 71 23" $lift={82}>{DoubleArrow}</Arrow></Splitter>

            <SidePane>
              <Drawing><WindowDrawing /></Drawing>
              <CheckRow>
                <svg width="14" height="14" viewBox="0 0 14 14" aria-hidden="true"><path d="m1.500 7 4 4.500L12 2.500" fill="none" stroke="#1f9a2c" strokeWidth="3.500" /></svg>
              </CheckRow>
              <InfoBox>
                <InfoTable>
                  <caption>Eenheid</caption>
                  <colgroup><col width="95" /><col width="175" /><col /></colgroup>
                  <tbody>
                    {info.map((r) => <tr key={r[0]}><th scope="row">{r[0]}</th><td>{r[1]}</td><td>{r[2]}</td></tr>)}
                  </tbody>
                </InfoTable>
                <InfoScroll>
                  <ScrollButton aria-label="Info omhoog"><Chevron size={13} /></ScrollButton>
                  <ScrollTrack><Thumb $part={27} /></ScrollTrack>
                  <ScrollButton aria-label="Info omlaag"><Chevron size={13} turn={180} /></ScrollButton>
                </InfoScroll>
              </InfoBox>
            </SidePane>
          </Workspace>
          <Actions>
            <ActionButton><u>D</u>etail</ActionButton>
            <ActionButton>Toebehoor</ActionButton>
            <ActionButton>Prijscorrectie</ActionButton>
            <ActionButton>Stuksprijzen</ActionButton>
            <ActionButton>Info</ActionButton>
            <ActionButton>Pos.-teksten</ActionButton>
            <ActionButton>Alternatief</ActionButton>
          </Actions>
        </TabPanel>
        <StatusBar>
          <StatusText>Invoergebied zichtbaar maken/verbergen</StatusText>
          <StatusCell $w={24} />
          <StatusCell $w={37} />
          <StatusCell $w={37} />
          <StatusCell $w={41}>09:26</StatusCell>
          <StatusCell $w={32}>CAP</StatusCell>
          <StatusCell $w={34}>NUM</StatusCell>
        </StatusBar>
        <Shade />
      </Frame>
    </Page>
  );
}
